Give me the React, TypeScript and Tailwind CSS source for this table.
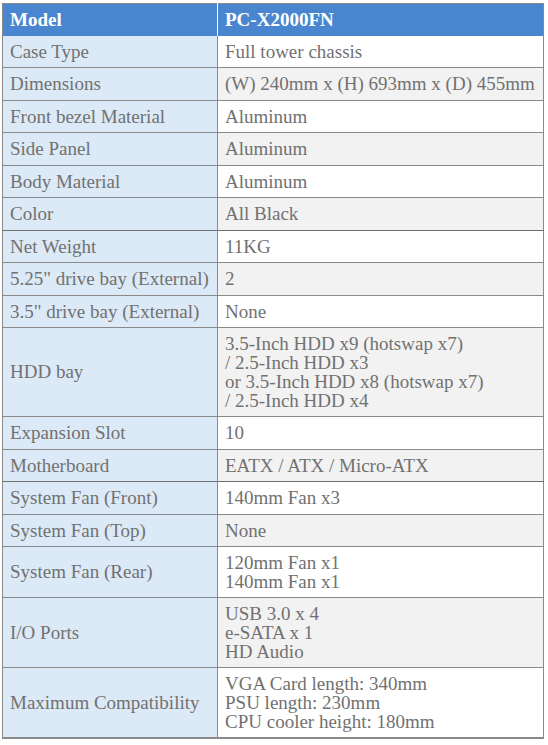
type Row = { label: string; value: string[]; dark?: boolean };

const rows: Row[] = [
  { label: "Case Type", value: ["Full tower chassis"] },
  { label: "Dimensions", value: ["(W) 240mm x (H) 693mm x (D) 455mm"] },
  { label: "Front bezel Material", value: ["Aluminum"] },
  { label: "Side Panel", value: ["Aluminum"] },
  { label: "Body Material", value: ["Aluminum"] },
  { label: "Color", value: ["All Black"], dark: true },
  { label: "Net Weight", value: ["11KG"] },
  { label: '5.25" drive bay (External)', value: ["2"] },
  { label: '3.5" drive bay (External)', value: ["None"] },
  {
    label: "HDD bay",
    value: [
      "3.5-Inch HDD x9 (hotswap x7)",
      "/ 2.5-Inch HDD x3",
      "or 3.5-Inch HDD x8 (hotswap x7)",
      "/ 2.5-Inch HDD x4",
    ],
  },
  { label: "Expansion Slot", value: ["10"] },
  { label: "Motherboard", value: ["EATX / ATX / Micro-ATX"], dark: true },
  { label: "System Fan (Front)", value: ["140mm Fan x3"] },
  { label: "System Fan (Top)", value: ["None"] },
  { label: "System Fan (Rear)", value: ["120mm Fan x1", "140mm Fan x1"] },
  { label: "I/O Ports", value: ["USB 3.0 x 4", "e-SATA x 1", "HD Audio"] },
  {
    label: "Maximum Compatibility",
    value: [
      "VGA Card length: 340mm",
      "PSU length: 230mm",
      "CPU cooler height: 180mm",
    ],
  },
];

export default function App() {
  return (
    <div className="w-[548px] h-[745px] bg-white pt-[3px] pl-[2px]">
      <table className="w-[542px] border-collapse border border-[#8a8a8a] border-b-2 font-['Liberation_Serif','Times_New_Roman',serif] text-[19px] leading-[19.5px] text-[#717171]">
        <colgroup>
          <col className="w-[215px]" />
          <col />
        </colgroup>
        <thead>
          <tr className="bg-[#4a86cf] text-white h-[32px]">
            <th className="text-left font-bold px-[7px] border-r border-white">Model</th>
            <th className="text-left font-bold px-[7px]">PC-X2000FN</th>
          </tr>
        </thead>
        <tbody>
          {rows.map((r, i) => (
            <tr
              key={r.label}
              className={`border-b ${r.dark ? "border-[#6f6f6f]" : "border-[#8a8a8a]"}`}
            >
              <td className="bg-[#dce9f7] px-[7px] py-[6px] border-r border-[#8a8a8a] align-middle whitespace-nowrap">
                {r.label}
              </td>
              <td
                className={`px-[7px] py-[6px] align-middle whitespace-nowrap ${
                  i % 2 === 0 ? "bg-white" : "bg-[#f2f2f2]"
                }`}
              >
                {r.value.length === 1
                  ? r.value[0]
                  : r.value.map((v) => (
                      <div key={v} className="leading-[19px]">
                        {v}
                      </div>
                    ))}
              </td>
            </tr>
          ))}
        </tbody>
      </table>
    </div>
  );
}
